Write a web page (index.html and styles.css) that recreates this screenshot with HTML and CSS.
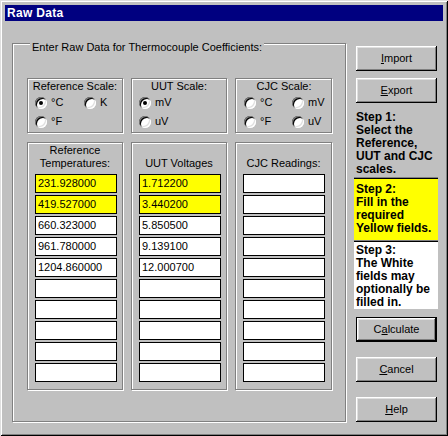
FILE: index.html
```html
<!DOCTYPE html>
<html>
<head>
<meta charset="utf-8">
<link rel="stylesheet" href="styles.css">
</head>
<body>
<div class="window">
  <div class="titlebar"><span class="title">Raw Data</span></div>
  <div class="main">
    <div class="group outer">
      <div class="legend">Enter Raw Data for Thermocouple Coefficients:</div>
      <div class="cols">
        <div class="group scale">
          <div class="glabel">Reference Scale:</div>
          <div class="radios">
            <div class="radio"><span class="dot on"></span>°C</div>
            <div class="radio"><span class="dot"></span>K</div>
            <div class="radio"><span class="dot"></span>°F</div>
          </div>
        </div>
        <div class="group scale">
          <div class="glabel">UUT Scale:</div>
          <div class="radios">
            <div class="radio"><span class="dot on"></span>mV</div>
            <div class="radio"></div>
            <div class="radio"><span class="dot"></span>uV</div>
          </div>
        </div>
        <div class="group scale cjc">
          <div class="glabel">CJC Scale:</div>
          <div class="radios">
            <div class="radio"><span class="dot"></span>°C</div>
            <div class="radio"><span class="dot"></span>mV</div>
            <div class="radio"><span class="dot"></span>°F</div>
            <div class="radio"><span class="dot"></span>uV</div>
          </div>
        </div>
      </div>
      <div class="cols data">
        <div class="group datacol">
          <div class="dlabel">Reference<br>Temperatures:</div>
          <div class="fields">
            <div class="field req">231.928000</div>
            <div class="field req">419.527000</div>
            <div class="field">660.323000</div>
            <div class="field">961.780000</div>
            <div class="field">1204.860000</div>
            <div class="field"></div>
            <div class="field"></div>
            <div class="field"></div>
            <div class="field"></div>
            <div class="field"></div>
          </div>
        </div>
        <div class="group datacol">
          <div class="dlabel">UUT Voltages</div>
          <div class="fields">
            <div class="field req">1.712200</div>
            <div class="field req">3.440200</div>
            <div class="field">5.850500</div>
            <div class="field">9.139100</div>
            <div class="field">12.000700</div>
            <div class="field"></div>
            <div class="field"></div>
            <div class="field"></div>
            <div class="field"></div>
            <div class="field"></div>
          </div>
        </div>
        <div class="group datacol">
          <div class="dlabel">CJC Readings:</div>
          <div class="fields">
            <div class="field"></div>
            <div class="field"></div>
            <div class="field"></div>
            <div class="field"></div>
            <div class="field"></div>
            <div class="field"></div>
            <div class="field"></div>
            <div class="field"></div>
            <div class="field"></div>
            <div class="field"></div>
          </div>
        </div>
      </div>
    </div>
    <div class="side">
      <div class="btn"><u>I</u>mport</div>
      <div class="btn btn-export"><u>E</u>xport</div>
      <div class="step step1">Step 1:<br>Select the<br>Reference,<br>UUT and CJC<br>scales.</div>
      <div class="step step2">Step 2:<br>Fill in the<br>required<br>Yellow fields.</div>
      <div class="step step3">Step 3:<br>The White<br>fields may<br>optionally be<br>filled in.</div>
      <div class="btn btn-default">C<u>a</u>lculate</div>
      <div class="btn btn-gap"><u>C</u>ancel</div>
      <div class="btn btn-gap"><u>H</u>elp</div>
    </div>
  </div>
</div>
</body>
</html>
```
FILE: styles.css
```css
html, body {
  margin: 0;
  padding: 0;
  background: #c0c0c0;
}

.window {
  width: 448px;
  height: 436px;
  box-sizing: border-box;
  padding: 5px 4px 4px 4px;
  background: #c0c0c0;
  box-shadow: inset 1px 1px 0 #dfdfdf, inset -1px -1px 0 #000, inset 2px 2px 0 #fff, inset -2px -2px 0 #808080;
  font-family: "Liberation Sans", Arial, sans-serif;
  font-size: 11px;
  line-height: 13px;
  color: #000;
  overflow: hidden;
}

.titlebar {
  height: 16px;
  margin: 0 1px;
  background: #000080;
  display: flex;
  align-items: center;
  padding-left: 2px;
}

.title {
  color: #fff;
  font-weight: bold;
  font-size: 12px;
  line-height: 16px;
  letter-spacing: 0.3px;
}

.main {
  display: flex;
  align-items: flex-start;
  padding: 22px 0 0 8px;
}

.group {
  box-sizing: border-box;
  border: 1px solid #808080;
  box-shadow: inset 1px 1px 0 #fff, 1px 1px 0 #fff;
}

.outer {
  width: 334px;
  height: 379px;
  padding: 0 12px 0 14px;
}

.legend {
  width: fit-content;
  margin: -3px 0 24px 3px;
  padding: 0 2px;
  background: #c0c0c0;
  white-space: nowrap;
}

.cols {
  display: grid;
  grid-template-columns: 96px 96px 97px;
  column-gap: 8px;
}

.cols.data {
  margin-top: 9px;
}

.scale {
  height: 55px;
  padding: 1px 0 0 7px;
}

.scale.cjc {
  padding-left: 8px;
}

.glabel {
  text-align: center;
  margin-left: -7px;
  height: 13px;
}

.radios {
  display: grid;
  grid-template-columns: 49px 40px;
  grid-auto-rows: 19px;
}

.cjc .radios {
  grid-template-columns: 48px 40px;
}

.radio {
  display: flex;
  align-items: center;
  gap: 4px;
  white-space: nowrap;
}

.dot {
  position: relative;
  flex: none;
  width: 12px;
  height: 12px;
  border-radius: 50%;
  background: #fff;
  box-shadow: inset 1px 1px 0 #808080, inset -1px -1px 0 #fff, inset 2px 2px 0 #000, inset -2px -2px 0 #dfdfdf;
}

.dot.on::after {
  content: "";
  position: absolute;
  left: 4px;
  top: 4px;
  width: 4px;
  height: 4px;
  border-radius: 50%;
  background: #000;
}

.datacol {
  height: 248px;
  padding: 1px 0 0 7px;
}

.dlabel {
  height: 26px;
  margin-left: -7px;
  display: flex;
  flex-direction: column;
  justify-content: flex-end;
  text-align: center;
  margin-bottom: 4px;
}

.fields {
  display: flex;
  flex-direction: column;
  gap: 2px;
}

.field {
  box-sizing: border-box;
  width: 82px;
  height: 19px;
  border: 1px solid #000;
  background: #fff;
  padding-left: 2px;
  line-height: 17px;
  white-space: nowrap;
  overflow: hidden;
}

.field.req {
  background: #ffff00;
}

.side {
  width: 84px;
  margin: 3px 0 0 8px;
  display: flex;
  flex-direction: column;
}

.btn {
  box-sizing: border-box;
  width: 81px;
  height: 25px;
  margin-left: 2px;
  display: flex;
  align-items: center;
  justify-content: center;
  background: #c0c0c0;
  box-shadow: inset -1px -1px 0 #000, inset 1px 1px 0 #fff, inset -2px -2px 0 #808080, inset 2px 2px 0 #dfdfdf;
}

.btn-export {
  margin-top: 7px;
}

.btn-default {
  margin-top: 8px;
  border: 1px solid #000;
}

.btn-gap {
  margin-top: 15px;
}

.step {
  font-size: 12px;
  font-weight: bold;
  line-height: 13px;
  padding-left: 2px;
  white-space: nowrap;
}

.step1 {
  margin-top: 8px;
  height: 66px;
}

.step2 {
  background: #ffff00;
  border-top: 1px solid #000;
  box-shadow: 0 -1px 0 #808080;
  margin-top: 1px;
  padding-top: 4px;
  padding-bottom: 5px;
}

.step3 {
  background: #fff;
  border-top: 1px solid #000;
  box-shadow: 0 -1px 0 #808080;
  margin-top: 1px;
  padding-top: 2px;
  height: 65px;
}
```
